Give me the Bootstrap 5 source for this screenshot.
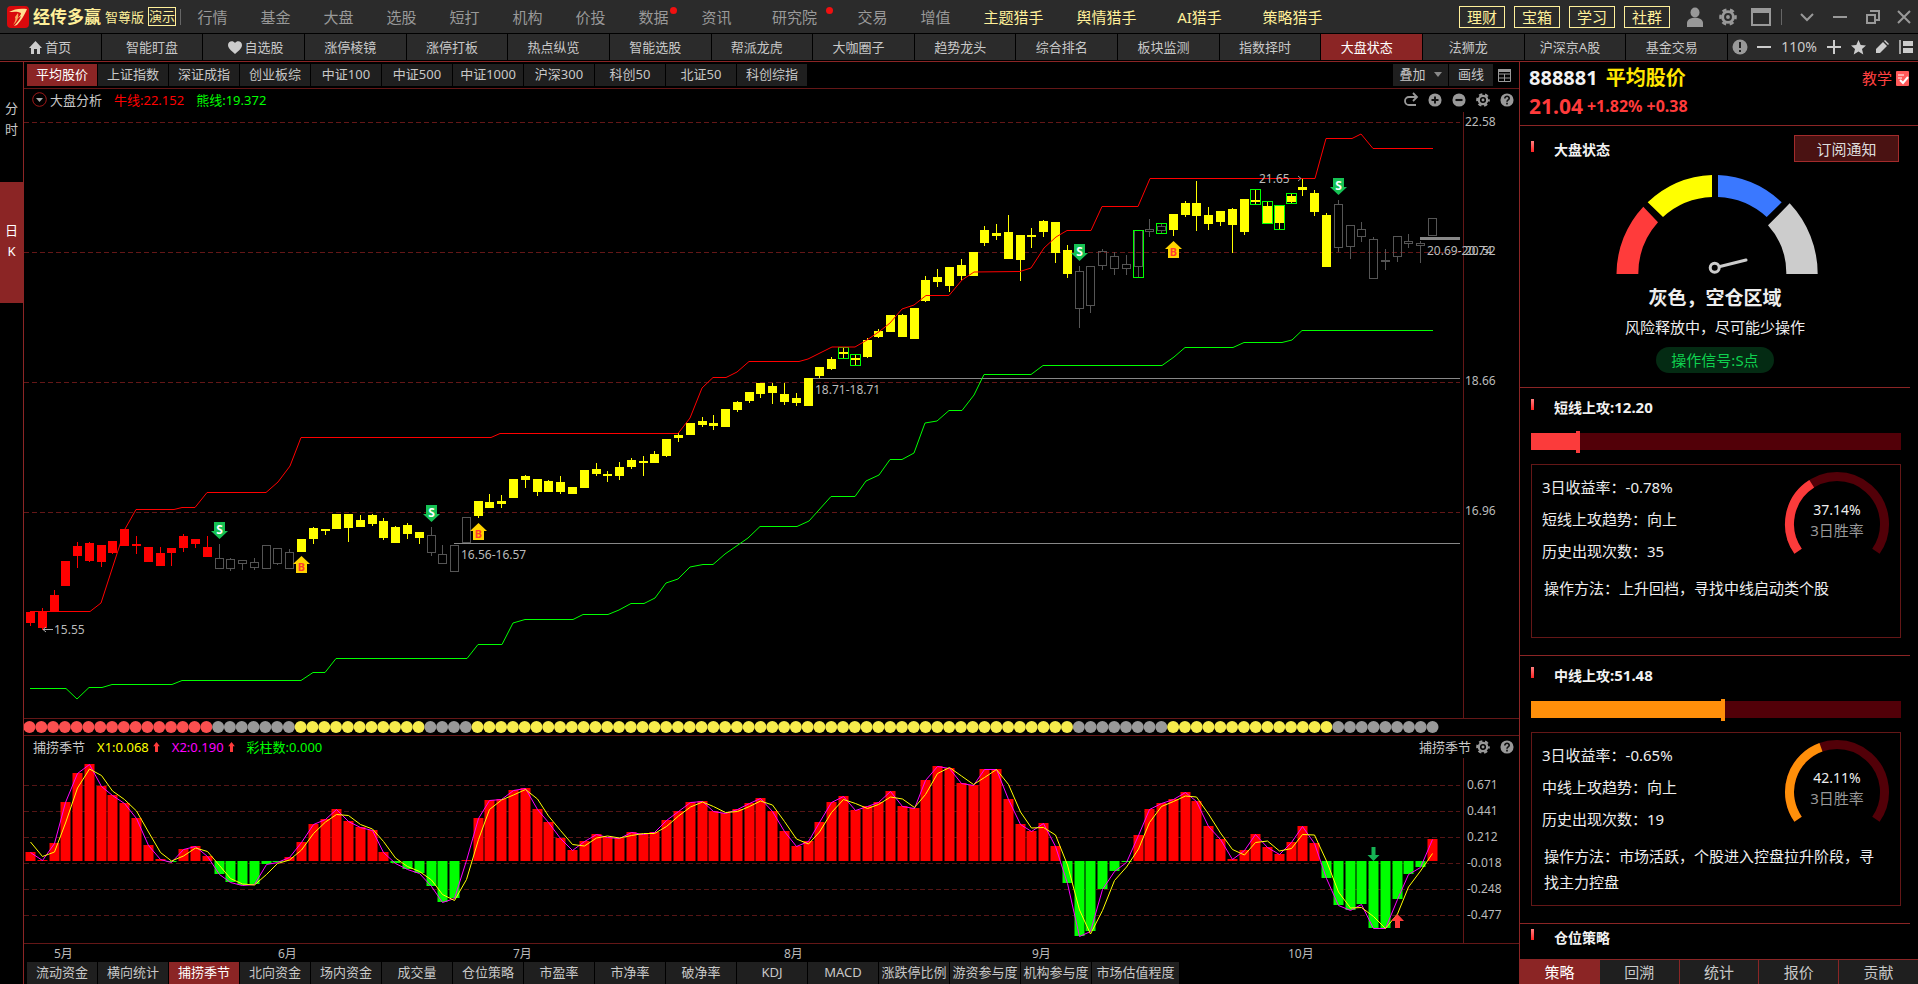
<!DOCTYPE html>
<html lang="zh-CN">
<head>
<meta charset="utf-8">
<meta name="viewport" content="width=device-width, initial-scale=1">
<title>经传多赢 - 大盘状态</title>
<link href="https://cdn.jsdelivr.net/npm/bootstrap@5.3.0/dist/css/bootstrap.min.css" rel="stylesheet">
<style>
:root{--line:#8b2525;--dim:#641717;--bar:#2b2b2b;--tile:#1f1f1f;--soft:#c8c8c8;--gold:#fff09a}
body{background:#000;color:var(--soft);font-family:"Noto Sans","Noto Sans CJK SC",sans-serif;font-size:13px;line-height:20px}
.btn{--bs-btn-padding-x:0;--bs-btn-padding-y:0;--bs-btn-font-size:13px;--bs-btn-line-height:20px;--bs-btn-border-width:0;--bs-btn-border-radius:0;--bs-btn-color:var(--soft);--bs-btn-hover-color:#fff;white-space:nowrap}
a{text-decoration:none;color:inherit}
svg{display:block}
.topbar{height:33px;background:var(--bar);margin-bottom:1px;padding-left:7px}
.brand-name{font-size:17px;font-weight:700;color:var(--gold)}
.gold{color:var(--gold)}
.demo-tag{border:1px solid var(--gold);height:19px;line-height:17px;width:28px;text-align:center;color:var(--gold)}
.topmenu a{width:63px;text-align:center;font-size:15px;color:#999;position:relative}
.topmenu a.wide{width:93px}
.topmenu a.gold{color:var(--gold)}
.dot{position:absolute;width:7px;height:7px;border-radius:50%;background:#f01010;top:0;right:8px}
.gold-set{gap:9px}
.gold-btn{width:46px;height:22px;border:1px solid var(--gold)!important;--bs-btn-color:var(--gold);--bs-btn-font-size:15px}
.vsep{width:1px;height:16px;background:#666}
.tool-icon{width:33px;color:#999}
.tool-icon.last{width:29px}
.tool-icon svg,.mini svg{margin:auto}
.subnav{height:28px;border-bottom:1px solid var(--line);padding-bottom:1px}
.subnav nav{display:grid;grid-template-columns:repeat(17,1fr)}
.subnav a{background:var(--bar);margin-right:1px;display:flex;align-items:center;justify-content:center;gap:3px;white-space:nowrap;min-width:0}
.subnav a.lft{padding-right:10px}
.subnav a.on,.tile.on{background:#8b2525;color:#fff}
.zoomset{width:190px;background:var(--bar);color:#ccc}
.zoom-num{font-size:14px}
.mini{width:24px;color:#999}
.zoomset .mini{color:#ccc}
.side{width:24px;border-right:1px solid var(--line);padding-top:36px}
.side .btn{line-height:21px;width:23px}
.side .day{background:#8b2525;height:121px;margin-top:42px;color:#fff;padding-bottom:4px}
.tabs-top{height:27px;border-bottom:1px solid var(--dim);padding:2px 4px 2px 3px}
.tile{background:var(--tile);width:70px;height:22px;margin-right:1px;--bs-btn-line-height:18px;padding-bottom:2px}
.charthead{height:23px;padding-bottom:2px}
.subhead{height:22px;padding-left:9px}
.legend{gap:12px}
.dots{height:18px;border-top:1px solid var(--dim);border-bottom:1px solid var(--dim)}
.plot-a{flex:606 1 0;min-height:0}
.plot-b{flex:185 1 0;min-height:0}
.months{height:19px;border-top:1px solid var(--dim)}
.plot-a svg,.plot-b svg,.dots svg,.months svg{width:100%;height:100%}
.plot-a text,.plot-b text,.months text{font-size:12px;fill:#bbb}
.tabs-bottom{height:22px;padding-left:3px}
.panel{width:399px;border-left:1px solid var(--line)}
.quote{height:64px;border-bottom:1px solid var(--line);padding:3px 9px 0 9px}
.code{font-size:20px;line-height:26px;font-weight:700;color:#f2f2f2}
.up{color:#ff3b3b;font-weight:700}
.price-now{font-size:21px;line-height:30px}
.price-chg{font-size:16px}
.teach{color:#ff4040;font-size:15px}
.sect{border-bottom:1px solid var(--line);margin-right:8px;padding:11px 9px 0 11px}
.mark-bar{width:3px;height:11px;background:linear-gradient(#ff8080,#f22)}
.sect-title{font-size:14px;font-weight:700;color:#f2f2f2;margin:0 0 0 20px;line-height:18px;height:18px}
.sect-title span{font-size:15px;line-height:16px}
.state{height:262px;padding:9px 11px 0 11px}
.state .mark-bar{margin-top:6px}
.state .sect-title{margin-top:6px}
.sect.tail{padding-top:5px;border-bottom:0}
.sub-btn{width:105px;height:27px;background:#4a1212;border:1px solid #a32b2b!important;--bs-btn-font-size:15px;--bs-btn-color:#ddd}
.state-name{font-size:19px;line-height:28px;font-weight:700;color:#eee;margin:9px 0 0}
.state-tip{font-size:15px;line-height:24px;color:#eee;margin:3px 0 8px}
.signal{background:#042b13;color:#0fd14f;border-radius:13px;width:118px;height:26px;line-height:26px;font-size:15px;text-align:center}
.gauge{margin-top:9px}
.attack{height:268px}
.meter{height:17px;background:#520008;position:relative;margin-top:16px}
.meter i{position:absolute;left:0;top:0;bottom:0;background:var(--c)}
.meter b{position:absolute;top:-2px;width:4px;height:22px;background:var(--c)}
.info{border:1px solid var(--dim);height:174px;margin-top:14px;padding:6px 10px 0 10px;color:#eee;font-size:15px}
.info p{margin:0;line-height:32px}
.info .how{line-height:26px;margin:6px 0 0 2px;padding-right:8px}
.ring{width:106px;height:98px}
.foot-tabs{height:25px;border-top:1px solid var(--line)}
.foot-tabs .btn{flex:1 1 0;background:var(--tile);border-right:1px solid var(--line)!important;--bs-btn-font-size:15px}
.foot-tabs .btn.on{background:#8b2525;--bs-btn-color:#fff}
.foot-tabs .btn:last-child{border-right:0!important}
</style>
</head>
<body class="vh-100 d-flex flex-column overflow-hidden">
<svg width="0" height="0" class="position-absolute" aria-hidden="true">
  <symbol id="gear" viewBox="0 0 16 16"><circle cx="8" cy="8" r="4.800" fill="none" stroke="currentColor" stroke-width="2.600"/><circle cx="8" cy="8" r="6.700" fill="none" stroke="currentColor" stroke-width="2.200" stroke-dasharray="3.800 3.216" stroke-dashoffset="1.900"/><circle cx="8" cy="8" r="1.700" fill="currentColor"/></symbol>
  <symbol id="help" viewBox="0 0 16 16"><circle cx="8" cy="8" r="7.500" fill="currentColor"/><path d="M5.500 6.300c0-3.500 5.200-3.300 5 0C10.400 8 8 7.900 8 10M8 11.200v1.800" fill="none" stroke="#111" stroke-width="1.900"/></symbol>
  <symbol id="plusc" viewBox="0 0 16 16"><circle cx="8" cy="8" r="7.500" fill="currentColor"/><path d="M8 4v8M4 8h8" stroke="#111" stroke-width="2.200"/></symbol>
  <symbol id="minusc" viewBox="0 0 16 16"><circle cx="8" cy="8" r="7.500" fill="currentColor"/><path d="M4 8h8" stroke="#111" stroke-width="2.400"/></symbol>
  <symbol id="uparrow" viewBox="0 0 8 12"><path d="M4 0l4 5H5.800v7H2.200V5H0z" fill="#ff3b3b"/></symbol>
</svg>

<header class="topbar d-flex align-items-center flex-shrink-0">
  <svg class="flex-shrink-0" width="22" height="22" viewBox="0 0 22 22"><rect width="22" height="22" rx="4" fill="#d9090c"/><path d="M2 6c5-3 11-4 18-3-2 5-6 12-10 16l-3 1c3-3 6-7 7-10l-4 3c2-2 4-4 4-6-4-2-8-1-12-1z" fill="#ffdf90"/><path d="M6 19c2-3 3-6 2-8l3-4c1 4-1 9-5 12z" fill="#f7a95c"/></svg>
  <span class="brand-name ms-1">经传多赢</span><span class="gold ms-1">智尊版</span><span class="demo-tag ms-1">演示</span><span class="vsep ms-1"></span>
  <nav class="topmenu d-flex me-auto">
    <a href="#">行情</a><a href="#">基金</a><a href="#">大盘</a><a href="#">选股</a><a href="#">短打</a><a href="#">机构</a><a href="#">价投</a><a href="#">数据<i class="dot"></i></a><a href="#">资讯</a><a href="#" class="wide">研究院<i class="dot"></i></a><a href="#">交易</a><a href="#">增值</a><a href="#" class="wide gold">主题猎手</a><a href="#" class="wide gold">舆情猎手</a><a href="#" class="wide gold">AI猎手</a><a href="#" class="wide gold">策略猎手</a>
  </nav>
  <div class="gold-set d-flex me-2">
    <button class="btn gold-btn">理财</button><button class="btn gold-btn">宝箱</button><button class="btn gold-btn">学习</button><button class="btn gold-btn">社群</button>
  </div>
  <button class="btn tool-icon" aria-label="用户"><svg width="18" height="20" viewBox="0 0 18 20"><ellipse cx="9" cy="5.500" rx="4.500" ry="5" fill="currentColor"/><path d="M1 20v-4c0-7 16-7 16 0v4z" fill="currentColor"/></svg></button>
  <button class="btn tool-icon" aria-label="设置"><svg width="18" height="18"><use href="#gear"/></svg></button>
  <button class="btn tool-icon" aria-label="窗口"><svg width="20" height="18"><path d="M1 1h18v16H1zM1 4h18" fill="none" stroke="currentColor" stroke-width="2"/><path d="M1 1h18v4H1z" fill="currentColor"/></svg></button>
  <span class="vsep ms-1 me-2"></span>
  <button class="btn tool-icon" aria-label="展开"><svg width="16" height="16"><path d="M2 5l6 6 6-6" fill="none" stroke="currentColor" stroke-width="2"/></svg></button>
  <button class="btn tool-icon" aria-label="最小化"><svg width="16" height="16"><path d="M1 8h14" stroke="currentColor" stroke-width="2"/></svg></button>
  <button class="btn tool-icon" aria-label="还原"><svg width="16" height="16"><path d="M2 6h8v8H2zM5 2h9v9h-3" fill="none" stroke="currentColor" stroke-width="2"/></svg></button>
  <button class="btn tool-icon last" aria-label="关闭"><svg width="16" height="16"><path d="M2 2l12 12M14 2L2 14" stroke="currentColor" stroke-width="2"/></svg></button>
</header>

<div class="subnav d-flex flex-shrink-0">
  <nav class="flex-grow-1">
    <a href="#"><svg width="13" height="13" viewBox="0 0 13 13"><path d="M6.500 0L13 7h-2v6H8V8H5v5H2V7H0z" fill="#ccc"/></svg>首页</a>
    <a href="#">智能盯盘</a>
    <a href="#" class="ps-1"><svg width="14" height="13" viewBox="0 0 14 13"><path d="M7 2c2-3 7-2 7 2 0 4-5 7-7 9C5 11 0 8 0 4 0 0 5-1 7 2z" fill="#ccc"/></svg>自选股</a>
    <a href="#" class="lft">涨停棱镜</a><a href="#" class="lft">涨停打板</a><a href="#" class="lft">热点纵览</a><a href="#" class="lft">智能选股</a><a href="#" class="lft">帮派龙虎</a><a href="#" class="lft">大咖圈子</a><a href="#" class="lft">趋势龙头</a><a href="#" class="lft">综合排名</a><a href="#" class="lft">板块监测</a><a href="#" class="lft">指数择时</a><a href="#" class="lft on">大盘状态</a><a href="#" class="lft">法狮龙</a><a href="#" class="lft">沪深京A股</a><a href="#" class="lft">基金交易</a>
  </nav>
  <div class="zoomset d-flex align-items-center flex-shrink-0">
    <button class="btn mini" aria-label="提示"><svg width="16" height="16"><circle cx="8" cy="8" r="7.500" fill="#999"/><path d="M8 3v6M8 11v2" stroke="#222" stroke-width="2"/></svg></button>
    <button class="btn mini" aria-label="缩小"><svg width="14" height="14"><path d="M0 7h14" stroke="currentColor" stroke-width="2"/></svg></button>
    <span class="zoom-num text-center flex-grow-1">110%</span>
    <button class="btn mini" aria-label="放大"><svg width="14" height="14"><path d="M0 7h14M7 0v14" stroke="currentColor" stroke-width="2"/></svg></button>
    <button class="btn mini" aria-label="收藏"><svg width="15" height="15" viewBox="0 0 15 15"><path d="M7.500 0l2.200 5 5.300.4-4 3.600 1.300 5.500-4.800-3-4.800 3L4 9 0 5.400 5.300 5z" fill="currentColor"/></svg></button>
    <button class="btn mini" aria-label="编辑"><svg width="14" height="14"><path d="M1 9l7-7 4 4-7 7H1z" fill="currentColor"/><path d="M9 1l1-1 4 4-1 1z" fill="currentColor"/></svg></button>
    <button class="btn mini" aria-label="列表"><svg width="14" height="14"><path d="M1 0v14" stroke="currentColor" stroke-width="1.500"/><path d="M4 1h10v5H4zM4 8h10v5H4z" fill="currentColor"/></svg></button>
  </div>
</div>

<div class="d-flex flex-grow-1" style="min-height:0">
  <aside class="side d-flex flex-column flex-shrink-0">
    <button class="btn">分<br>时</button>
    <button class="btn day">日<br>K</button>
  </aside>

  <main class="d-flex flex-column flex-grow-1" style="min-width:0">
    <div class="tabs-top d-flex flex-shrink-0">
      <button class="btn tile on">平均股价</button><button class="btn tile">上证指数</button><button class="btn tile">深证成指</button><button class="btn tile">创业板综</button><button class="btn tile">中证100</button><button class="btn tile">中证500</button><button class="btn tile">中证1000</button><button class="btn tile">沪深300</button><button class="btn tile">科创50</button><button class="btn tile">北证50</button><button class="btn tile">科创综指</button>
      <button class="btn tile ms-auto d-flex align-items-center justify-content-center gap-2" style="width:55px">叠加<svg width="8" height="5"><path d="M0 0h8L4 5z" fill="#888"/></svg></button>
      <button class="btn tile" style="width:44px">画线</button>
      <button class="btn mini" style="width:21px" aria-label="表格"><svg width="13" height="13"><path d="M.5 1.500h12v11H.5zM.5 5h12M.5 9h12M6.500 5v8" fill="none" stroke="#999"/><path d="M0 0h13v3H0z" fill="#999"/></svg></button>
    </div>
    <div class="charthead d-flex align-items-center flex-shrink-0 ps-2">
      <svg width="15" height="15"><circle cx="7.500" cy="7.500" r="6.800" fill="none" stroke="#a01818"/><path d="M4 6h7l-3.500 4z" fill="#aaa"/></svg>
      <div class="legend d-flex" style="padding-left:3px"><span>大盘分析</span><span style="color:#f00">牛线:22.152</span><span style="color:#0f0">熊线:19.372</span></div>
      <button class="btn mini ms-auto" aria-label="重置"><svg width="15" height="15"><path d="M13 5H5a4 4 0 0 0 0 8h7M9 1l4 4-4 4" fill="none" stroke="currentColor" stroke-width="1.800"/></svg></button>
      <button class="btn mini" aria-label="放大"><svg width="14" height="14"><use href="#plusc"/></svg></button>
      <button class="btn mini" aria-label="缩小"><svg width="14" height="14"><use href="#minusc"/></svg></button>
      <button class="btn mini" aria-label="设置"><svg width="14" height="14"><use href="#gear"/></svg></button>
      <button class="btn mini" aria-label="帮助"><svg width="14" height="14"><use href="#help"/></svg></button>
    </div>
    <div class="plot-a"><svg id="price" viewBox="24 112 1495 606"></svg></div>
    <div class="dots flex-shrink-0"><svg id="beads" viewBox="24 719 1495 16"></svg></div>
    <div class="subhead d-flex align-items-center flex-shrink-0">
      <div class="legend d-flex">
        <span>捕捞季节</span>
        <span class="d-flex align-items-center gap-1" style="color:#ff0">X1:0.068<svg width="7" height="10"><use href="#uparrow"/></svg></span>
        <span class="d-flex align-items-center gap-1" style="color:#f0f">X2:0.190<svg width="7" height="10"><use href="#uparrow"/></svg></span>
        <span style="color:#0f0">彩柱数:0.000</span>
      </div>
      <span class="ms-auto">捕捞季节</span>
      <button class="btn mini" aria-label="设置"><svg width="14" height="14"><use href="#gear"/></svg></button>
      <button class="btn mini" aria-label="帮助"><svg width="14" height="14"><use href="#help"/></svg></button>
    </div>
    <div class="plot-b"><svg id="season" viewBox="24 758 1495 185"></svg></div>
    <div class="months flex-shrink-0"><svg viewBox="24 944 1495 18"><text x="54" y="958">5月</text><text x="278" y="958">6月</text><text x="513" y="958">7月</text><text x="784" y="958">8月</text><text x="1032" y="958">9月</text><text x="1288" y="958">10月</text></svg></div>
    <div class="tabs-bottom d-flex flex-shrink-0">
      <button class="btn tile">流动资金</button><button class="btn tile">横向统计</button><button class="btn tile on">捕捞季节</button><button class="btn tile">北向资金</button><button class="btn tile">场内资金</button><button class="btn tile">成交量</button><button class="btn tile">仓位策略</button><button class="btn tile">市盈率</button><button class="btn tile">市净率</button><button class="btn tile">破净率</button><button class="btn tile">KDJ</button><button class="btn tile">MACD</button><button class="btn tile">涨跌停比例</button><button class="btn tile">游资参与度</button><button class="btn tile">机构参与度</button><button class="btn tile" style="width:87px">市场估值程度</button>
    </div>
  </main>

  <aside class="panel d-flex flex-column flex-shrink-0">
    <div class="quote flex-shrink-0">
      <div class="d-flex align-items-center"><span class="code">888881</span><span class="code ms-2" style="color:#ffe600">平均股价</span>
        <a href="#" class="teach ms-auto d-flex align-items-center gap-1">教学<svg width="13" height="15"><rect width="13" height="15" rx="1" fill="#ff5a5a"/><path d="M2 4h6M2 7h4" stroke="#fff"/><path d="M4 9l3 3 5-6" fill="none" stroke="#fff" stroke-width="2"/></svg></a></div>
      <div class="d-flex align-items-center up gap-1"><span class="price-now">21.04</span><span class="price-chg">+1.82%</span><span class="price-chg">+0.38</span></div>
    </div>
    <div class="flex-grow-1 overflow-hidden">
      <section class="sect state">
        <div class="d-flex align-items-start"><span class="mark-bar"></span><h2 class="sect-title">大盘状态</h2><button class="btn sub-btn ms-auto">订阅通知</button></div>
        <div class="d-flex flex-column align-items-center">
          <svg class="gauge" width="210" height="104" viewBox="1610 172 210 104">
            <path d="M1616.500 275A99 99 0 0 1 1643.300 207.700L1658 223.300A77 77 0 0 0 1638.300 275z" fill="#ff3b3b"/>
            <path d="M1647.700 203.300A99 99 0 0 1 1712 176V198A77 77 0 0 0 1663 218z" fill="#ff0"/>
            <path d="M1718 176A99 99 0 0 1 1781.700 203.300L1766.700 218A77 77 0 0 0 1718 198z" fill="#3a78ff"/>
            <path d="M1789.700 204.300A103 103 0 0 1 1817.700 275H1786.300A71 71 0 0 0 1768 226.300z" fill="#ccc"/>
            <path d="M1720 267.500L1746 261" stroke="#ccc" stroke-width="3" stroke-linecap="round"/><circle cx="1714.700" cy="268.700" r="4.500" fill="none" stroke="#ccc" stroke-width="3"/>
          </svg>
          <div class="state-name">灰色，空仓区域</div><div class="state-tip">风险释放中，尽可能少操作</div><div class="signal">操作信号:S点</div>
        </div>
      </section>
      <section class="sect attack" style="--c:#fb3b3b">
        <div class="d-flex"><span class="mark-bar"></span><h2 class="sect-title">短线上攻<span>:12.20</span></h2></div>
        <div class="meter"><i style="width:12.2%"></i><b style="left:12.2%"></b></div>
        <div class="info"><div class="d-flex justify-content-between"><div><p>3日收益率：-0.78%</p><p>短线上攻趋势：向上</p><p>历史出现次数：35</p></div><svg class="ring" data-p="37.14"></svg></div><p class="how">操作方法：上升回档，寻找中线启动类个股</p></div>
      </section>
      <section class="sect attack" style="--c:#ff8f0a">
        <div class="d-flex"><span class="mark-bar"></span><h2 class="sect-title">中线上攻<span>:51.48</span></h2></div>
        <div class="meter"><i style="width:51.48%"></i><b style="left:51.48%"></b></div>
        <div class="info"><div class="d-flex justify-content-between"><div><p>3日收益率：-0.65%</p><p>中线上攻趋势：向上</p><p>历史出现次数：19</p></div><svg class="ring" data-p="42.11"></svg></div><p class="how">操作方法：市场活跃，个股进入控盘拉升阶段，寻找主力控盘</p></div>
      </section>
      <section class="sect tail"><div class="d-flex"><span class="mark-bar"></span><h2 class="sect-title">仓位策略</h2></div></section>
    </div>
    <div class="foot-tabs d-flex flex-shrink-0"><button class="btn on">策略</button><button class="btn">回溯</button><button class="btn">统计</button><button class="btn">报价</button><button class="btn">贡献</button></div>
  </aside>
</div>

<script src="https://cdn.jsdelivr.net/npm/bootstrap@5.3.0/dist/js/bootstrap.bundle.min.js"></script>
<script>
// One entry per trading day: high, body top, body bottom, low on the chart's vertical scale
const candles = `612 612 623 626,608 612 628 630,590 595 611 611,561 561 586 586,542 546 556 568,542 543 561 562,545 545 562 567,541 541 553 554,529 529 546 546,536 544 546 554,547 547 562 562,547 553 566 566,548 548 553 566,534 536 548 552,539 539 544 548,536 547 557 557,
544 558 569 569,558 559 569 571,560 560 564 570,558 562 568 570,545 545 569 569,548 548 564 565,549 552 569 569,
539 539 552 552,527 528 539 544,529 529 531 535,514 514 529 529,514 514 528 542,515 520 527 527,514 515 524 526,518 521 538 540,526 527 543 543,523 525 534 539,532 532 538 544,
527 535 553 556,545 554 564 564,545 545 572 572,517 517 543 543,
501 501 516 518,494 502 508 508,495 501 504 508,479 479 498 498,475 476 480 488,479 479 492 496,480 481 492 492,476 482 492 494,487 487 494 494,470 470 488 488,463 469 474 476,471 474 476 482,462 467 476 480,458 460 467 469,456 461 463 476,451 454 463 463,439 439 456 457,433 435 438 442,423 423 435 435,417 421 425 427,415 423 426 430,409 409 427 427,401 402 410 412,392 392 401 403,383 383 394 398,383 386 393 404,383 394 402 405,393 398 403 406,378 378 406 406,367 367 376 378,357 359 369 370,348 352 354 358,355 358 360 365,338 340 357 358,329 331 337 338,315 315 332 332,314 315 337 337,308 308 339 339,276 280 301 302,269 277 282 287,267 267 286 292,259 265 276 280,252 252 276 276,226 230 243 246,224 233 236 240,215 232 259 259,235 235 260 281,228 235 237 248,220 221 232 237,222 222 253 263,245 250 274 278,
266 271 309 328,266 266 306 313,249 251 266 270,252 256 269 275,255 264 269 275,230 230 267 278,219 229 232 237,223 226 231 234,
214 214 230 236,201 203 215 217,181 203 216 231,207 215 224 230,211 211 222 226,208 209 225 253,199 199 232 235,189 200 202 204,201 206 224 224,205 205 223 229,193 196 202 203,178 187 190 196,190 193 212 216,213 215 267 267,
200 204 248 252,225 225 247 259,222 229 237 242,237 239 279 279,249 260 262 270,236 236 257 262,234 241 244 248,241 243 246 263,218 218 236 236`.split(',').map(s => s.trim().split(' ').map(Number));
const season = [852,860,843,802,773,764,786,795,803,818,845,859,862,849,846,856,874,882,885,884,864,862,857,842,824,819,809,821,827,830,852,863,869,873,886,902,898,860,818,800,799,790,788,809,822,838,850,841,834,837,838,832,834,832,820,811,802,801,811,813,809,803,798,811,831,846,841,822,802,796,810,806,802,791,806,808,780,766,768,783,785,769,769,799,824,831,823,846,883,936,931,889,871,862,835,809,803,799,792,801,826,839,859,850,834,847,854,842,826,843,878,905,910,904,928,928,899,874,867,839];
const STEP = 11.782, X0 = 30.5, BASE = 861;
const px = i => Math.round(X0 + STEP * i - .5) + .5;
const zone = i => i < 16 ? 'r' : i < 23 ? 'g' : i < 34 ? 'y' : i < 38 ? 'g' : i < 89 ? 'y' : i < 97 ? 'g' : i < 111 ? 'y' : 'g';
const paint = {r:'#f00', y:'#ff0', g:'#555'};

let s = '';
for (const y of [122.5,252.5,382.5,512.5]) s += `<path d="M24 ${y}H1460" stroke="#641717" stroke-dasharray="5 3"/>`;
s += '<path d="M1463.500 112V718" stroke="#641717"/>';
s += '<path d="M454 543.500H1460M813 378.500H1460" stroke="#888"/><path d="M1420 238.500H1460" stroke="#888" stroke-width="3"/>';
candles.forEach(([h,t,b,l], i) => {
  const x = px(i), z = zone(i), c = paint[z];
  if (z === 'g') s += `<path d="M${x} ${h}V${t}M${x} ${b}V${l}" stroke="${c}"/><rect x="${x-4}" y="${t+.5}" width="8" height="${b-t-1}" fill="none" stroke="${c}"/>`;
  else s += `<path d="M${x} ${h}V${l}" stroke="${c}"/><rect x="${x-4.5}" y="${t}" width="9" height="${b-t}" fill="${c}"/>`;
});
// Days outlined in green
for (const [i,t,b] of [[69,347,359],[70,354,366],[94,230,278],[96,223,234],[104,189,205],[105,201,224],[106,205,230],[107,193,204]])
  s += `<rect x="${px(i)-5}" y="${t+.5}" width="10" height="${b-t-1}" fill="none" stroke="#0f0"/>`;
const line = (p, c) => `<polyline points="${p}" fill="none" stroke="${c}" stroke-width="1"/>`;
s += line('30,611.5 90,611.5 101,603 125,529 136,509.5 174,509.5 182,507.5 195,507.5 207,492.5 266,492.5 278,482 290,466 301,437.5 491,437.5 500,433.5 678,433.5 690,418 702,388 713,377.5 726,377.5 737,372 749,361.5 799,361.5 808,359 820,353 832,347 855,347 867,340 880,331 890,323 902,309 914,305 926,295.5 949,295.5 962,280 974,272 1020,271.5 1031,268 1044,248 1056,237 1067,230.5 1091,230.5 1102,206.5 1138,206.5 1150,178.5 1315,178.5 1326,138.5 1352,138.5 1361,134 1373,148.5 1433,148.5', '#f00');
s += line('30,688.5 66,688.5 77,699 89,687.5 102,687.5 112,684.5 172,684.5 182,680.5 301,680.5 313,672.5 325,672.5 336,658.5 467,658.5 478,644.5 502,644.5 513,623 525,619.5 573,619.5 583,614.5 608,614.5 619,610 631,603.5 644,603.5 655,598 666,583 678,579 690,567 703,564.5 713,564.5 725,554 748,538 760,526.5 797,526.5 809,521 831,496.5 855,496.5 866,481 879,475 890,459.5 902,459.5 914,453 925,423 937,421 949,410.5 962,410.5 974,395 984,374.5 1031,374.5 1043,365.5 1162,365.5 1174,357 1185,347.5 1233,347.5 1244,342.5 1282,342.5 1292,340 1302,330.5 1433,330.5', '#0f0');
for (const [i,y] of [[16,522],[34,505],[89,244],[111,178]]) {
  const x = px(i);
  s += `<path d="M${x-5.5} ${y}h11v9h3l-8.500 8-8.500-8h3z" fill="#16c254"/><text x="${x}" y="${y+12}" text-anchor="middle" font-weight="700" style="fill:#fff">S</text>`;
}
for (const [i,y] of [[23,556],[38,523],[97,241]]) {
  const x = px(i);
  s += `<path d="M${x-5.5} ${y+17}v-9h-3l8.500-8 8.500 8h-3v9z" fill="#ffd400"/><text x="${x}" y="${y+15}" text-anchor="middle" font-weight="700" style="fill:#ff3b2f;font-size:11px">B</text>`;
}
s += '<path d="M53 629.500H43M46 627l-3 2.500 3 2.500" fill="none" stroke="#aaa"/><path d="M1298 176l3 2.500-3 2.500" fill="none" stroke="#999"/>';
for (const [x,y,t] of [[54,634,'15.55'],[461,559,'16.56-16.57'],[815,394,'18.71-18.71'],[1259,183,'21.65'],[1427,255,'20.69-20.74'],[1465,126,'22.58'],[1465,255,'20.52'],[1465,385,'18.66'],[1465,515,'16.96']])
  s += `<text x="${x}" y="${y}">${t}</text>`;
document.getElementById('price').innerHTML = s;

const bead = {r:'#fb4f4f', g:'#999', y:'#f7ec4c'};
document.getElementById('beads').innerHTML = candles.map((_, i) => `<circle cx="${29.500 + 11.79 * i}" cy="727" r="6" fill="${bead[zone(i)]}"/>`).join('');

s = '';
for (const y of [785.5,811.5,837.5,863.5,889.5,915.5]) s += `<path d="M24 ${y}H1460" stroke="#551515" stroke-dasharray="5 3"/>`;
s += '<path d="M1463.500 758V943" stroke="#641717"/>';
season.forEach((v, i) => { s += `<rect x="${px(i)-5}" y="${Math.min(v,BASE)}" width="10" height="${Math.abs(v-BASE)}" fill="${v < BASE ? '#f00' : '#0f0'}"/>`; });
s += line(season.map((v, i) => `${px(i)},${v+.5}`).join(' '), '#f0f');
s += line(season.map((v, i) => `${px(i)},${i ? (v+season[i-1])/2+.5 : 842}`).join(' '), '#ff0');
s += '<path d="M1371.500 847h4v8h4l-6 6-6-6h4z" fill="#16b254"/><path d="M1395 928h5v-7h4l-6.500-7-6.500 7h4z" fill="#ff3b3b"/>';
['0.671','0.441','0.212','-0.018','-0.248','-0.477'].forEach((t, i) => { s += `<text x="1467" y="${789 + 26 * i}">${t}</text>`; });
document.getElementById('season').innerHTML = s;

// Win-rate rings: a 250 degree arc, filled by the percentage
document.querySelectorAll('.ring').forEach(el => {
  const p = +el.dataset.p, at = d => { const a = (145 + d) * Math.PI / 180; return `${53 + 47.500 * Math.cos(a)} ${54 + 47.500 * Math.sin(a)}`; };
  const arc = (d, c) => `<path d="M${at(0)}A47.500 47.500 0 ${d > 180 ? 1 : 0} 1 ${at(d)}" fill="none" stroke="${c}" stroke-width="9"/>`;
  el.setAttribute('viewBox', '0 1 106 98');
  el.innerHTML = arc(250, '#520008') + arc(250 * p / 100, 'var(--c)') + `<text x="53" y="45" text-anchor="middle" font-size="14" fill="#eee">${p}%</text><text x="53" y="66" text-anchor="middle" font-size="15" fill="#999">3日胜率</text>`;
});
</script>
</body>
</html>
